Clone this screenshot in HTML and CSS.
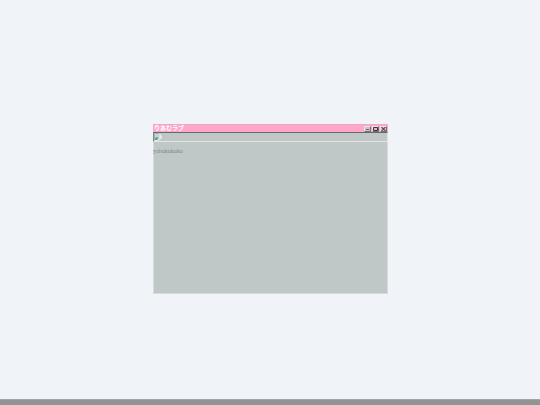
FILE: index.html
```html
<!DOCTYPE html>
<html lang="ja">
<head>
<meta charset="utf-8">
<title>りあむラブ</title>
<link rel="stylesheet" href="styles.css">
</head>
<body>
<main class="desktop">
  <section class="window">
    <header class="titlebar">
      <h1 class="title">りあむラブ</h1>
      <div class="controls">
        <button class="control" type="button" aria-label="Minimize"><svg viewBox="0 0 5 4"><path d="M1 2.5h3" stroke="#806870"/></svg></button>
        <button class="control" type="button" aria-label="Maximize"><svg viewBox="0 0 5 4"><path d="M.5 .5h4v3h-4z" fill="none" stroke="#453039"/></svg></button>
        <button class="control" type="button" aria-label="Close"><svg viewBox="0 0 5 4"><path d="M.5 0l4 4M4.5 0l-4 4" stroke="#302028"/></svg></button>
      </div>
    </header>
    <div class="picture">
      <svg class="broken" viewBox="0 0 8 8" aria-hidden="true">
        <path d="M0 0h5l3 3v5H0z" fill="#e2e9ea"/>
        <path d="M1 1h4l1 2-2 2-3 1z" fill="#bcd5ed"/>
        <path d="M1 7V5l2-1 2 1-2 2z" fill="#6ba56b"/>
        <path d="M.5 7.5v-7H5" fill="none" stroke="#8b9696" stroke-width=".7"/>
        <path d="M4 8l4-3v3z" fill="#bfc7c7"/>
      </svg>
    </div>
    <p class="message">yabukukuku</p>
  </section>
</main>
<footer class="taskbar"></footer>
</body>
</html>
```
FILE: styles.css
```css
* {
  box-sizing: border-box;
}

body {
  margin: 0;
  min-height: 100vh;
  display: flex;
  flex-direction: column;
  background: #f0f4f9;
  font-family: "Liberation Sans", "Noto Sans CJK JP", sans-serif;
}

.desktop {
  flex: 1;
  display: grid;
  place-items: center;
  padding: 19px 0 0 1px;
}

.window {
  width: 43.6%;
  min-height: 170px;
  background: #bfc7c7;
  box-shadow: inset 0 0 0 1px #d5dbdc;
}

.titlebar {
  display: flex;
  align-items: center;
  justify-content: space-between;
  height: 8px;
  padding-right: 1px;
  border-top: 1px solid #e8abc7;
  background: #ffa6ca;
}

.title {
  margin: 0 1px;
  color: #fff;
  font-size: 6px;
  line-height: 7px;
}

.controls {
  display: flex;
  gap: 1px;
}

.control {
  display: grid;
  place-items: center;
  width: 7px;
  height: 6px;
  padding: 0;
  border: 1px solid;
  border-color: #eee4e8 #806b73 #806b73 #eee4e8;
  background: #c5c1c4;
}

.control svg {
  width: 5px;
  height: 4px;
}

.picture {
  height: 10px;
  border: 1px solid;
  border-color: #626a6e #dfe4e4 #dfe4e4 #7f8788;
}

.broken {
  display: block;
  width: 8px;
  height: 8px;
}

.message {
  margin: 6px 0 0;
  color: #7f8787;
  font-family: "Liberation Serif", "Noto Sans CJK JP", serif;
  font-size: 6px;
  line-height: 7px;
}

.taskbar {
  height: 6px;
  border-top: 1px solid #a4a5a6;
  background: #929393;
}
```
